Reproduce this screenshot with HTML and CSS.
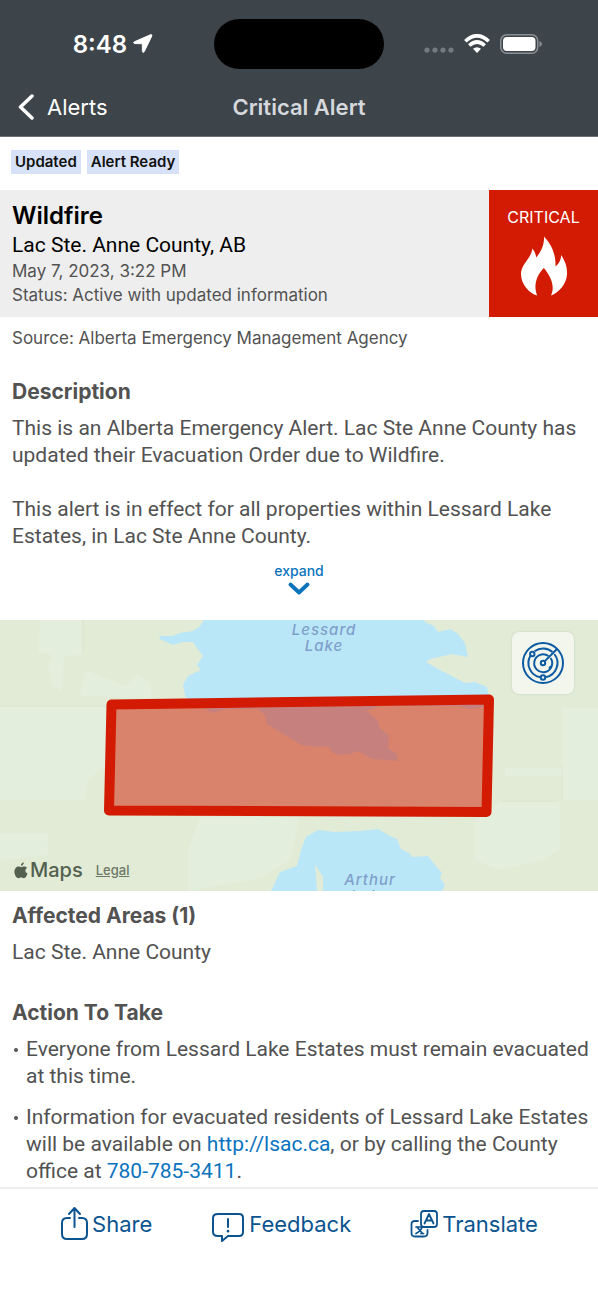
FILE: index.html
```html
<!DOCTYPE html>
<html lang="en">
  <head>
    <meta charset="utf-8">
    <meta name="viewport" content="width=device-width, initial-scale=1">
    <title>Critical Alert</title>
    <link rel="stylesheet" href="styles.css">
  </head>
  <body>
    <header class="header">
      <div class="status-bar">
        <div class="status-left">
          <span>8:48</span>
          <svg width="20" height="20" viewBox="0 0 20 20">
            <path d="M17.600 0.700 L1.400 7.800 Q-0.300 8.900 1.600 9.600 L8.500 9.700 Q9.300 9.700 9.300 10.500 L9.400 17.600 Q10 19.400 11.200 17.700 L18.800 2 Q19.300 0.300 17.600 0.700z" fill="#fff" stroke="#fff"/>
          </svg>
        </div>
        <div class="island"></div>
        <div class="status-right">
          <svg width="30" height="20" viewBox="0 0 30 20" fill="#737a80">
            <circle cx="3" cy="16" r="2.600"/>
            <circle cx="11" cy="16" r="2.600"/>
            <circle cx="19" cy="16" r="2.600"/>
            <circle cx="27" cy="16" r="2.600"/>
          </svg>
          <svg width="26" height="20" viewBox="0 0 26 20" fill="none" stroke="#fff">
            <path d="M1.300 7.200 Q13 -3.600 24.700 7.200" stroke-width="3.600"/>
            <path d="M5.300 11.500 Q13 4.500 20.700 11.500" stroke-width="3.600"/>
            <path d="M9 14.800 Q13 11.600 17 14.800 L13 19z" fill="#fff" stroke="none"/>
          </svg>
          <svg width="42" height="20" viewBox="0 0 42 20">
            <rect x="0.750" y="0.750" width="37" height="18.500" rx="6" fill="none" stroke="#8b9095" stroke-width="1.500"/>
            <rect x="3" y="3" width="32.500" height="14" rx="4" fill="#fff"/>
            <path d="M39.500 7 Q42 8 42 10 Q42 12 39.500 13z" fill="#8b9095"/>
          </svg>
        </div>
      </div>
      <nav class="nav">
        <a class="back" href="#">
          <svg width="17" height="26" viewBox="0 0 17 26" fill="none" stroke="#fff" stroke-width="3.500" stroke-linecap="round" stroke-linejoin="round">
            <path d="M14 2 L2.500 13 L14 24"/>
          </svg>
          Alerts
        </a>
        <h1 class="nav-title">Critical Alert</h1>
      </nav>
    </header>

    <main class="content">
      <div class="tags">
        <span class="tag">Updated</span>
        <span class="tag">Alert Ready</span>
      </div>

      <section class="alert">
        <div class="alert-info">
          <h2 class="alert-name">Wildfire</h2>
          <p class="alert-place">Lac Ste. Anne County, AB</p>
          <p class="alert-meta">May 7, 2023, 3:22 PM</p>
          <p class="alert-meta">Status: Active with updated information</p>
        </div>
        <div class="alert-level">
          <span>CRITICAL</span>
          <svg width="48" height="60" viewBox="0 0 48 60">
            <path d="M24 0.500 C29 6 36 15 35.500 30.500 C39 27.500 41 24 41.300 19 C45 25 47.500 31 47 38.500 C46.500 48 39 56.500 31 59.500 C36 49 29 38 23.800 32 C18 38 12.500 48 17.200 59.500 C9 57 0.500 48 1 37 C1.500 28 11.500 22 12.300 12.500 C14.500 15 15.800 18 16.200 21.500 C21 16 24.500 9 24 0.500z" fill="#fff"/>
          </svg>
        </div>
      </section>

      <p class="source">Source: Alberta Emergency Management Agency</p>

      <section class="section">
        <h3 class="heading">Description</h3>
        <p class="text">This is an Alberta Emergency Alert. Lac Ste Anne County has updated their Evacuation Order due to Wildfire.</p>
        <p class="text text-next">This alert is in effect for all properties within Lessard Lake Estates, in Lac Ste Anne County.</p>
      </section>

      <button class="expand" type="button">
        expand
        <svg width="22" height="14" viewBox="0 0 22 14" fill="none" stroke="#0a73bd" stroke-width="3.800" stroke-linecap="round" stroke-linejoin="round">
          <path d="M2.500 2.500 L11 10.500 L19.500 2.500"/>
        </svg>
      </button>

      <div class="map">
        <svg class="map-canvas" viewBox="0 0 598 271" preserveAspectRatio="xMidYMid slice">
          <rect width="598" height="271" fill="#e1ebd5"/>
          <!-- fields -->
          <g fill="#e4eedd">
            <path d="M40 0 H82 V35 L64 36 L62 72 L52 66 L48 44 L53 35 L38 33z"/>
            <path d="M85 50 L126 66 L138 54 L151 63 V78 L80 76z"/>
            <path d="M0 87 H112 V140 L88 160 L84 180 H0z"/>
            <path d="M200 197 H300 L290 240 L262 258 L188 271 V230z"/>
            <path d="M0 213 H48 V235 L0 240z"/>
            <path d="M500 182 H560 V228 L544 240 L500 250 L475 240 V200z"/>
            <path d="M505 148 H562 V156 H505z M562 88 H598 V180 H562z"/>
          </g>
          <g fill="none" stroke="#dbe4d0">
            <path d="M83 0 V33 M0 86 H108 M562 145 V180 M503 181 H554"/>
          </g>
          <!-- lakes -->
          <g fill="#bae7f8">
            <path d="M204 0 L200 6 L193 11 L180 13 L172 16 L160 16 Q158 19 162 20 L173 25 L183 22 L193 22 L197 28 L203 36 L197 45 L201 50 L188 56 L183 65 L185 75 L189 85 L203 88 L213 93 L226 89 L258 89 L265 95 L267 104 L290 118 L301 125 L316 127 L328 126 L332 132 L338 135 L350 134 L358 131 L372 139 L398 141 L397 134 L388 128 L389 116 L380 108 L377 99 L366 91 L380 86 L459 86 L470 89 L484 87 L489 76 L487 67 L475 62 L465 63 L440 50 L426 42 L430 39 L452 34 L468 37 L465 23 L457 13 L450 9 L438 12 L434 6 L425 2 L424 0z"/>
            <path d="M271 271 L280 252 L297 246 L301 230 L306 217 L318 210 L335 212 L360 211 L378 209 L390 216 L397 219 L401 229 L409 233 L412 237 L428 236 L436 246 L442 253 L440 258 L445 265 L442 271 L323 271 L323 257 L315 244 L317 271z"/>
          </g>
          <g class="lake-label">
            <text x="324" y="15">Lessard</text>
            <text x="324" y="31">Lake</text>
            <text x="370" y="265">Arthur</text>
            <text x="370" y="281">Lake</text>
          </g>
          <!-- affected area -->
          <path d="M111.500 84.500 L489 79.500 L486.500 192 L109 190.500z" fill="#d21c04" fill-opacity="0.500" stroke="#d21b02" stroke-width="10" stroke-linejoin="round"/>
        </svg>
        <button class="radar" type="button" aria-label="Radar">
          <svg width="44" height="44" viewBox="0 0 44 44" fill="none" stroke="#0d5ca3" stroke-width="2">
            <circle cx="22" cy="22" r="20"/>
            <path d="M31.500 11 A14.500 14.500 0 0 0 13.500 10.200 M9.400 14.700 A14.500 14.500 0 0 0 19.500 36.300 M24.500 36.300 A14.500 14.500 0 0 0 33.300 13"/>
            <path d="M27.500 15 A9 9 0 1 0 29.500 17"/>
            <circle cx="22" cy="22" r="2.200"/>
            <circle cx="11.300" cy="13" r="2.200"/>
            <circle cx="22" cy="36.500" r="2.200"/>
            <path d="M23.600 20.400 L36 8 M28 27.500 L30 25"/>
          </svg>
        </button>
        <div class="map-credit">
          <span class="maps-logo">
            <svg width="14" height="17" viewBox="0 0 14 17" fill="#54604f">
              <path d="M9.800 0.300 C10 1.900 8.700 3.700 6.900 3.800 C6.700 2.200 8.200 0.500 9.800 0.300z"/>
              <path d="M13 5.700 C10.700 7.200 10.900 10.400 13.600 11.600 C13 13.600 11.500 16.200 9.900 16.300 C8.800 16.300 8.500 15.600 7.200 15.600 C5.900 15.600 5.500 16.300 4.500 16.300 C2.400 16.200 0.300 12.500 0.400 9.500 C0.500 6.500 2.400 4.500 4.500 4.500 C5.700 4.500 6.500 5.200 7.300 5.200 C8 5.200 9.100 4.400 10.500 4.500 C11.500 4.500 12.400 4.900 13 5.700z"/>
            </svg>
            Maps
          </span>
          <a class="legal" href="#">Legal</a>
        </div>
      </div>

      <section class="section areas">
        <h3 class="heading">Affected Areas (1)</h3>
        <p class="text">Lac Ste. Anne County</p>
      </section>

      <section class="section actions">
        <h3 class="heading">Action To Take</h3>
        <ul class="list">
          <li>Everyone from Lessard Lake Estates must remain evacuated at this time.</li>
          <li>Information for evacuated residents of Lessard Lake Estates will be available on <a href="#">http://lsac.ca</a>, or by calling the County office at <a href="#">780-785-3411</a>.</li>
        </ul>
      </section>
    </main>

    <footer class="toolbar">
      <button class="tool" type="button">
        <svg width="30" height="36" viewBox="0 0 30 36" fill="none" stroke="#0b5490" stroke-width="2" stroke-linecap="round" stroke-linejoin="round">
          <path d="M10 12 H7 Q2 12 2 17 V28 Q2 33 7 33 H22 Q27 33 27 28 V17 Q27 12 22 12 H19"/>
          <path d="M14.500 21 V2.500 M9 8 L14.500 2 L20 8"/>
        </svg>
        Share
      </button>
      <button class="tool" type="button">
        <svg width="36" height="36" viewBox="0 0 36 36" fill="none" stroke="#0b5490" stroke-width="2" stroke-linecap="round" stroke-linejoin="round">
          <path d="M7 8 H28 Q32 8 32 12 V26 Q32 30 28 30 H17 L11 35 V30 H7 Q2 30 2 26 V12 Q2 8 7 8z"/>
          <path d="M17 13 V21"/>
          <path d="M17 25 V25.200" stroke-width="2.600"/>
        </svg>
        Feedback
      </button>
      <button class="tool" type="button">
        <svg width="30" height="36" viewBox="0 0 30 36" fill="none" stroke="#0b5490" stroke-width="1.800" stroke-linecap="round" stroke-linejoin="round">
          <rect x="11" y="5" width="16" height="16" rx="3"/>
          <path d="M14.500 17.500 L19 8 L23.500 17.500 M16 14.500 H22"/>
          <path d="M8 15 H5 Q1.500 15 1.500 18 V27 Q1.500 30.500 5 30.500 H14 Q17.500 30.500 17.500 27 V24"/>
          <path d="M6 21 H12.500 M7 21 L12.500 27.500 M12 21 Q11 25 6 27.500 M11 27.500 H13.500" stroke-width="1.700"/>
        </svg>
        Translate
      </button>
    </footer>
  </body>
</html>
```
FILE: styles.css
```css
* {
  box-sizing: border-box;
}

body {
  margin: 0;
  min-height: 100vh;
  display: flex;
  flex-direction: column;
  background: #fff;
  color: #525252;
  font-family: Inter, "Liberation Sans", sans-serif;
}

h1, h2, h3, p, ul {
  margin: 0;
  padding: 0;
}

a {
  color: #0a73bd;
  text-decoration: none;
}

button {
  border: none;
  background: none;
  padding: 0;
  font-family: inherit;
  cursor: pointer;
}

svg {
  display: block;
  flex-shrink: 0;
}

/* header */
.header {
  background: #3d444a;
  border-bottom: 1px solid #6a7074;
  color: #fff;
}

.status-bar {
  display: grid;
  grid-template-columns: 1fr 170px 1fr;
  align-items: center;
  padding-top: 19px;
}

.status-left {
  display: flex;
  align-items: center;
  justify-content: flex-end;
  gap: 6px;
  padding-right: 61px;
  font-size: 24px;
  font-weight: 600;
}

.island {
  height: 50px;
  border-radius: 25px;
  background: #000;
}

.status-right {
  display: flex;
  align-items: center;
  gap: 10px;
  padding-left: 40px;
}

.nav {
  display: grid;
  grid-template-columns: 1fr auto 1fr;
  align-items: center;
  height: 67px;
  padding: 9px 18px 0;
}

.back {
  display: flex;
  align-items: center;
  gap: 12px;
  color: #fff;
  font-size: 22px;
}

.nav-title {
  color: #d5d8dc;
  font-size: 22px;
  font-weight: 600;
}

/* alert summary */
.content {
  flex: 1;
}

.tags {
  display: flex;
  gap: 6px;
  padding: 13px 11px 16px;
}

.tag {
  padding: 0 4px;
  background: #d7e1f7;
  color: #111;
  font-size: 15px;
  font-weight: 600;
  line-height: 24px;
}

.alert {
  display: flex;
  background: #eee;
}

.alert-info {
  flex: 1;
  padding: 10px 12px;
}

.alert-name {
  color: #000;
  font-size: 24px;
  font-weight: 600;
  line-height: 32px;
}

.alert-place {
  color: #000;
  font-family: Roboto, "Liberation Sans", sans-serif;
  font-size: 21px;
  line-height: 27px;
}

.alert-meta, .source {
  font-size: 17px;
  line-height: 24px;
}

.alert-level {
  display: flex;
  flex-direction: column;
  align-items: center;
  gap: 7px;
  width: 109px;
  padding-top: 15px;
  background: #d21b02;
  color: #fff;
  font-size: 16px;
  line-height: 24px;
}

.source {
  padding: 9px 12px 0;
}

/* text sections */
.section {
  padding: 27px 4px 0 12px;
}

.heading {
  margin-bottom: 8px;
  font-size: 21px;
  font-weight: 700;
  line-height: 30px;
}

.text, .list {
  font-family: Roboto, "Liberation Sans", sans-serif;
  font-size: 21px;
  line-height: 27px;
}

.text-next {
  margin-top: 27px;
}

.areas {
  padding-top: 10px;
}

.actions {
  padding-top: 32px;
}

.expand {
  display: flex;
  flex-direction: column;
  align-items: center;
  gap: 1px;
  margin: 11px auto 24px;
  color: #0a73bd;
  font-size: 14px;
  font-weight: 500;
  line-height: 20px;
}

.list {
  list-style: none;
}

.list li {
  position: relative;
  padding-left: 14px;
}

.list li + li {
  margin-top: 14px;
}

.list li::before {
  content: "";
  position: absolute;
  left: 2px;
  top: 12px;
  width: 4px;
  height: 4px;
  border-radius: 50%;
  background: #525252;
}

/* map */
.map {
  position: relative;
}

.map-canvas {
  width: 100%;
}

.lake-label {
  fill: #7f9fcb;
  font-size: 15px;
  font-style: italic;
  font-weight: 500;
  letter-spacing: 1px;
  text-anchor: middle;
}

.radar {
  position: absolute;
  top: 12px;
  right: 24px;
  display: flex;
  align-items: center;
  justify-content: center;
  width: 62px;
  height: 62px;
  border-radius: 7px;
  background: #f2f6ed;
  box-shadow: 0 0 2px #c3cbb9;
}

.map-credit {
  position: absolute;
  left: 14px;
  bottom: 9px;
  display: flex;
  align-items: center;
  gap: 13px;
}

.maps-logo {
  display: flex;
  align-items: center;
  gap: 2px;
  color: #54604f;
  font-size: 20px;
  font-weight: 500;
}

.legal {
  color: #6d7867;
  font-size: 13px;
  font-weight: 500;
  text-decoration: underline;
}

/* bottom toolbar */
.toolbar {
  position: sticky;
  bottom: 0;
  display: flex;
  justify-content: center;
  gap: 59px;
  height: 113px;
  padding-top: 17px;
  border-top: 2px solid #eee;
  background: #fff;
}

.tool {
  display: flex;
  align-items: center;
  gap: 2px;
  height: 36px;
  color: #0b5490;
  font-size: 22px;
}
```
